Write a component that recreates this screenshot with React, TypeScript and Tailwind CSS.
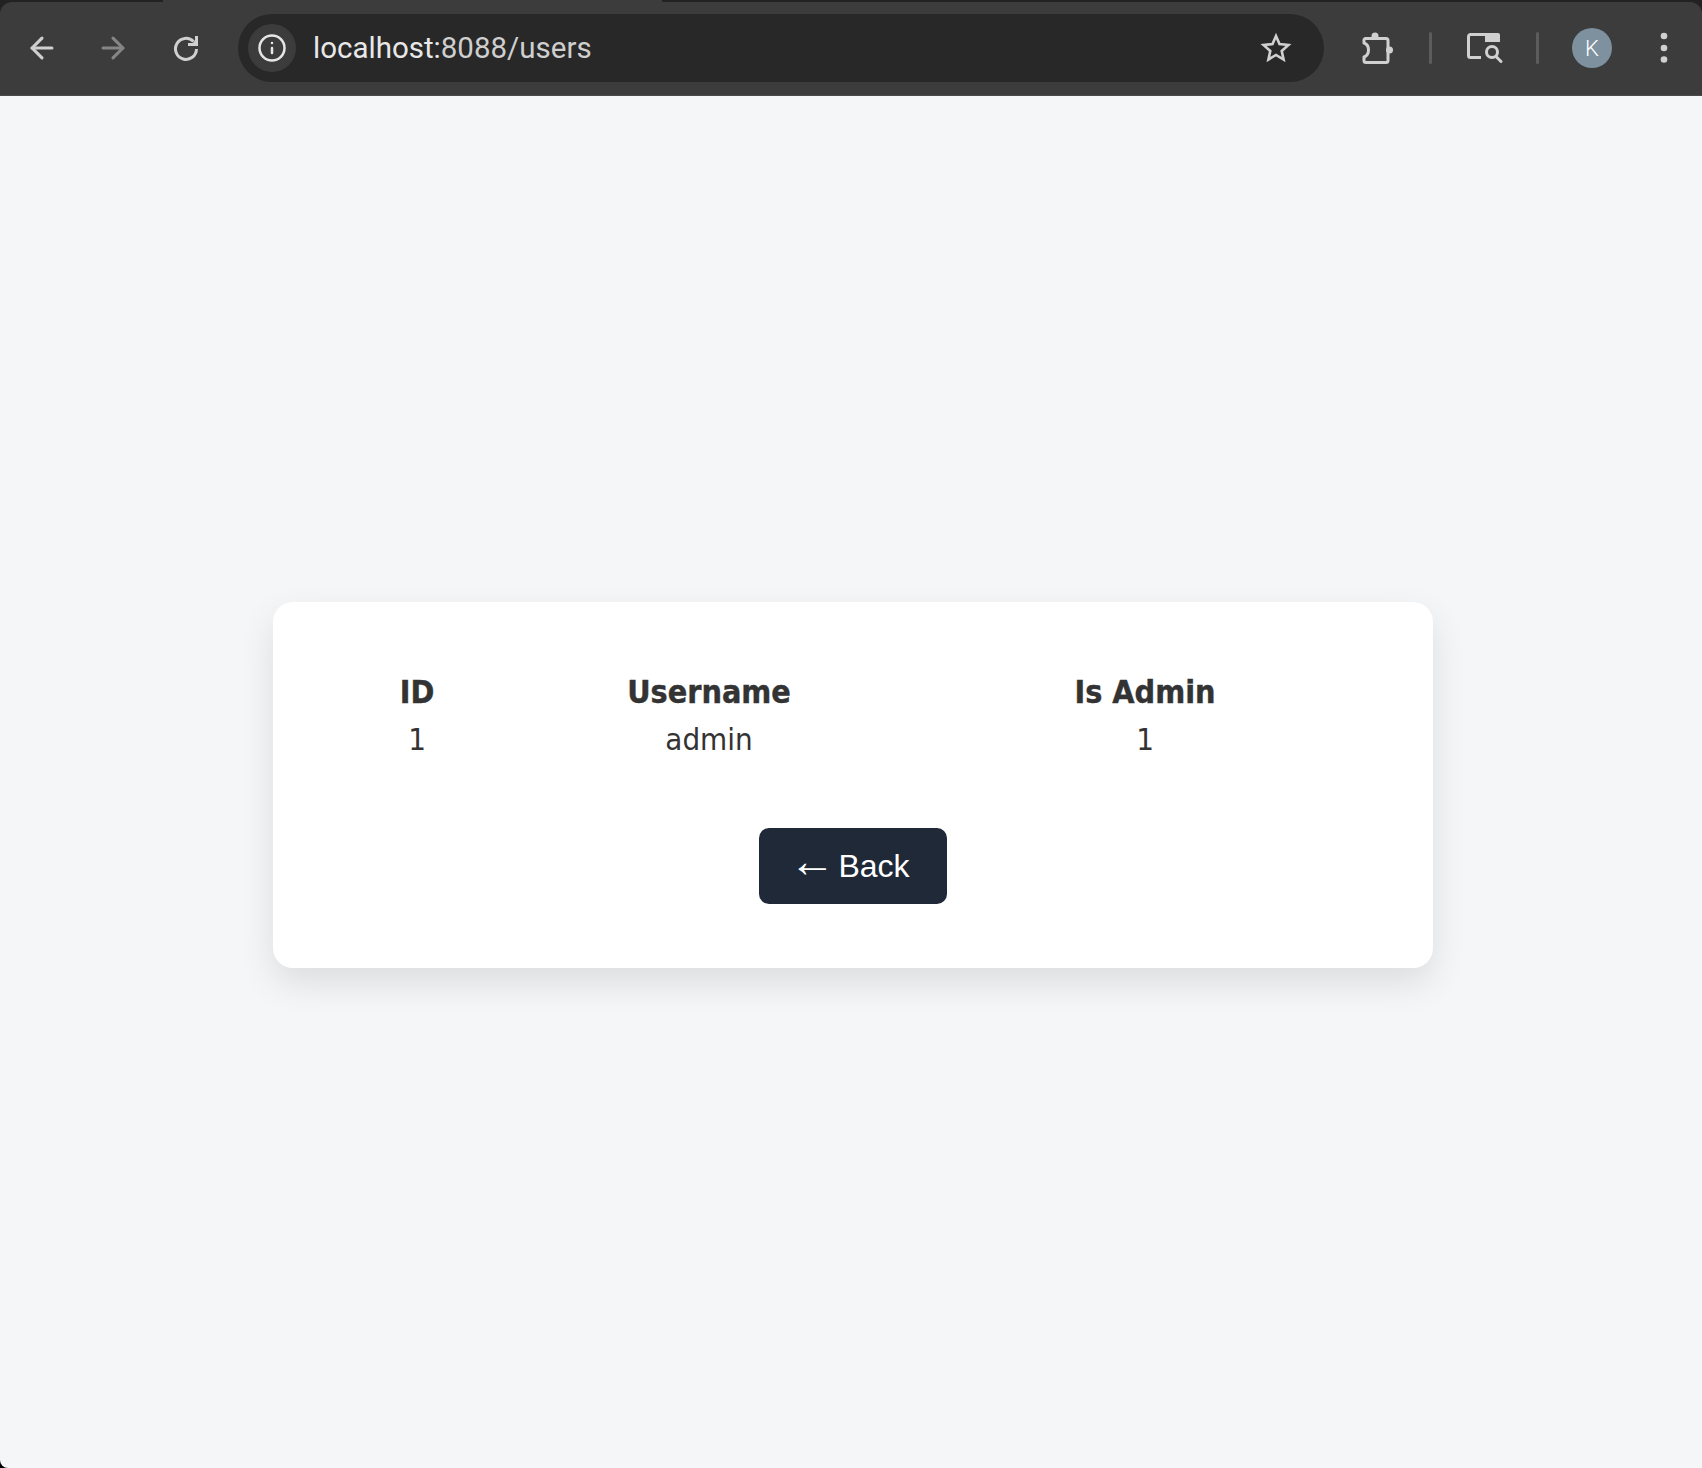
import { ArrowLeft, ArrowRight, Info } from "lucide-react";

function Reload() {
  return (
    <svg width="26" height="26" viewBox="0 0 26 26" fill="none" className="ml-[43px]">
      <path d="M20.500 6.500A10.500 10.500 0 1 0 23.500 14" stroke="#d0d0d0" strokeWidth="3" />
      <polygon points="25,1 25,11 15,11 15,8 20,8 22,5 22,1" fill="#d0d0d0" />
    </svg>
  );
}

function BookmarkStar() {
  return (
    <svg width="32" height="32" viewBox="0 0 32 32" fill="none" stroke="#d0d0d0" strokeWidth="2.600" strokeLinejoin="miter">
      <polygon points="16,4 19.500,12.100 28.400,13 21.700,18.900 23.600,27.500 16,23 8.400,27.500 10.300,18.900 3.600,13 12.500,12.100" />
    </svg>
  );
}

function Puzzle() {
  return (
    <svg width="34" height="34" viewBox="0 0 34 34" fill="none" stroke="#d0d0d0" strokeWidth="3" strokeLinejoin="round">
      <path d="M5.500 7.500H26a2 2 0 0 1 2 2V29.500a2 2 0 0 1-2 2H6a2 2 0 0 1-2-2V26c3-1 4.500-4 4.500-7S7 13 4 12V9a1.500 1.500 0 0 1 1.500-1.500z" />
      <circle cx="15" cy="5" r="3.500" fill="#d0d0d0" stroke="none" />
      <circle cx="29.500" cy="19" r="3.500" fill="#d0d0d0" stroke="none" />
    </svg>
  );
}

function MediaSearch() {
  return (
    <svg width="38" height="32" viewBox="0 0 38 32" fill="none" stroke="#d0d0d0" strokeWidth="3">
      <path d="M15 25.500H4.500a2 2 0 0 1-2-2V4.500a2 2 0 0 1 2-2H20" />
      <path d="M19 1h13a2 2 0 0 1 2 2v7H19z" fill="#d0d0d0" stroke="none" />
      <circle cx="26" cy="20" r="5.500" />
      <path d="M30 24.500l5 5" strokeLinecap="round" />
    </svg>
  );
}

function Dots() {
  return (
    <svg width="12" height="32" viewBox="0 0 12 32" fill="#d0d0d0" className="ml-[46px]">
      <circle cx="6" cy="4" r="3.300" />
      <circle cx="6" cy="16" r="3.300" />
      <circle cx="6" cy="27.500" r="3.300" />
    </svg>
  );
}

function Toolbar() {
  return (
    <div className="bg-[#222222]">
      <div className="flex h-[2px]">
        <div className="w-[163px]" />
        <div className="w-[499px] bg-[#3c3c3c]" />
      </div>
      <div className="flex h-[94px] items-center rounded-t-[12px] border-b border-[#4a4a4a] bg-[#3c3c3c] pb-[1px]">
        <div className="flex w-[238px] shrink-0 items-center pl-[25px]">
          <ArrowLeft size={34} strokeWidth={2.2} className="text-[#d0d0d0]" />
          <ArrowRight size={34} strokeWidth={2.2} className="ml-[37px] text-[#858585]" />
          <Reload />
        </div>
        <div className="flex h-[68px] w-[1086px] shrink-0 items-center rounded-full bg-[#282828] pl-[10px] pr-[32px]">
          <div className="flex h-[48px] w-[48px] items-center justify-center rounded-full bg-[#3c3c3c]">
            <Info size={30} strokeWidth={2} className="text-[#e6e6e6]" />
          </div>
          <span className="ml-[17px] flex-1 pt-[1px] font-['Roboto',sans-serif] text-[29.500px] text-[#e8e8e8]">
            localhost:<span className="text-[#cfcfcf]">8088/users</span>
          </span>
          <BookmarkStar />
        </div>
        <div className="flex flex-1 items-center pl-[36px]">
          <Puzzle />
          <div className="ml-[35px] h-[32px] w-[3px] rounded-full bg-[#5c5c5c]" />
          <div className="ml-[34px]"><MediaSearch /></div>
          <div className="ml-[32px] h-[32px] w-[3px] rounded-full bg-[#5c5c5c]" />
          <div className="ml-[33px] flex h-[40px] w-[40px] items-center justify-center rounded-full bg-[#7e919f] font-['Roboto',sans-serif] text-[22px] font-light text-white">
            K
          </div>
          <Dots />
        </div>
      </div>
    </div>
  );
}

export default function App() {
  return (
    <div className="bg-black">
      <div className="flex h-[1468px] flex-col overflow-hidden rounded-bl-[8px] bg-[#f4f6f8]">
        <Toolbar />
        <main className="flex flex-1 items-center justify-center pl-[4px] pt-[5px]">
          <div className="w-[1160px] rounded-[20px] bg-white p-16 shadow-[0_15px_35px_rgba(0,0,0,0.1)]">
            <table className="mt-[3px] w-full table-fixed font-['DejaVu_Sans',sans-serif] text-[31px] leading-[47px] text-[#333333] [font-stretch:condensed]">
              <thead>
                <tr className="text-[32px] [-webkit-text-stroke:0.4px_#333333]">
                  <th className="w-[160px] font-bold">ID</th>
                  <th className="w-[424px] font-bold">Username</th>
                  <th className="font-bold">Is Admin</th>
                </tr>
              </thead>
              <tbody>
                <tr className="text-center">
                  <td>1</td>
                  <td>admin</td>
                  <td>1</td>
                </tr>
              </tbody>
            </table>
            <div className="mt-[65px] flex justify-center">
              <button className="flex h-[76px] w-[188px] items-center justify-center rounded-[10px] bg-[#1f2937] font-['Liberation_Sans',sans-serif] text-[32px] text-white">
                <span className="-ml-[7px] mr-[3px] mt-[-10px] text-[46px] leading-none">←</span>
                Back
              </button>
            </div>
          </div>
        </main>
      </div>
    </div>
  );
}
